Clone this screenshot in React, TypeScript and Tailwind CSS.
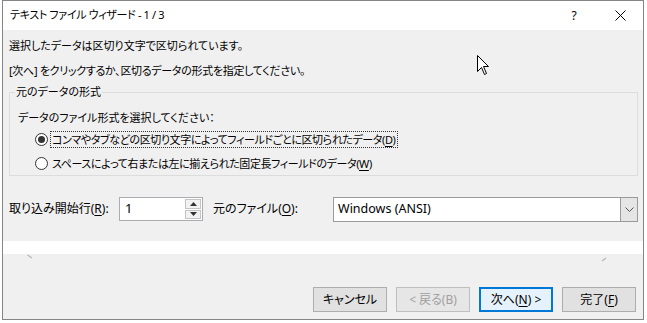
import React from 'react'

const jp = "[font-family:'Noto_Sans','Noto_Sans_CJK_JP',sans-serif] [font-feature-settings:'palt']"

// underlined access key like (D)
const Key = ({ k }: { k: string }) => (
  <>
    (<span className="underline underline-offset-2">{k}</span>)
  </>
)

const Radio = ({ checked }: { checked?: boolean }) => (
  <span className="w-[13px] h-[13px] rounded-full border border-[#333] bg-white flex items-center justify-center shrink-0">
    {checked && <span className="w-[7px] h-[7px] rounded-full bg-[#333]" />}
  </span>
)

const Btn = ({ children, disabled, primary }: { children: React.ReactNode; disabled?: boolean; primary?: boolean }) => (
  <div
    className={
      'w-[74px] h-[25px] flex items-center justify-center text-[12px] ' +
      (primary
        ? 'border-2 border-[#0078d7] bg-[#e5f1fb] text-black'
        : disabled
          ? 'border border-[#bfbfbf] bg-[#e6e6e6] text-[#a0a0a0]'
          : 'border border-[#adadad] bg-[#e1e1e1] text-black')
    }
  >
    {children}
  </div>
)

const Cursor = () => (
  <svg className="absolute left-[477px] top-[55px]" width="13" height="21" viewBox="0 0 13 21">
    <path d="M0.5 0.5 L0.5 16.5 L4.5 12.5 L7.5 19.5 L9.5 18.5 L6.5 11.5 L11.5 11.5 Z" fill="#fff" stroke="#000" strokeWidth="1" />
  </svg>
)

export default function App() {
  return (
    <div className={`w-[647px] h-[323px] bg-white overflow-hidden relative text-black ${jp}`}>
      <div className="ml-[2px] w-[642px] h-[320px] border border-[#858585] flex flex-col">
        {/* title bar */}
        <div className="h-[29px] bg-white flex items-center shrink-0">
          <div className="pl-[7px] text-[11px] tracking-[-0.35px] flex-1">テキスト ファイル ウィザード - 1 / 3</div>
          <div className="w-[46px] h-full flex items-center justify-center text-[12px]">?</div>
          <div className="w-[46px] h-full flex items-center justify-center">
            <svg width="11" height="11" viewBox="0 0 11 11">
              <path d="M0.5 0.5 L10.5 10.5 M10.5 0.5 L0.5 10.5" stroke="#000" strokeWidth="1" />
            </svg>
          </div>
        </div>

        {/* body */}
        <div className="flex-1 bg-[#f0f0f0] flex flex-col text-[11px]">
          <div className="pl-[6px] pt-[8px]">
            <div className="h-[16px] leading-[16px]">選択したデータは区切り文字で区切られています。</div>
            <div className="h-[16px] leading-[16px] mt-[9px] tracking-[-0.3px]">[次へ] をクリックするか、区切るデータの形式を指定してください。</div>

            <fieldset className="mt-[5px] w-[629px] border border-[#dcdcdc] pl-[5px] pb-[3px]">
              <legend className="leading-[16px] px-[1px]">元のデータの形式</legend>
              <div className="ml-[3px] pt-[10px] h-[26px] leading-[16px]">データのファイル形式を選択してください：</div>
              <div className="ml-[20px] mt-[5px] h-[17px] flex items-center gap-[2px]">
                <Radio checked />
                <span className="px-[1px] border border-dotted border-[#333] leading-[15px] tracking-[-0.4px]">
                  コンマやタブなどの区切り文字によってフィールドごとに区切られたデータ<Key k="D" />
                </span>
              </div>
              <div className="ml-[20px] mt-[7px] h-[17px] flex items-center gap-[2px]">
                <Radio />
                <span className="px-[1px] border border-transparent leading-[15px] tracking-[-0.4px]">
                  スペースによって右または左に揃えられた固定長フィールドのデータ<Key k="W" />
                </span>
              </div>
            </fieldset>

            <div className="mt-[21px] h-[24px] flex items-center text-[12px]">
              <div className="w-[110px]">取り込み開始行<Key k="R" />:</div>
              <div className="w-[84px] h-[24px] bg-white border border-[#abadb3] flex items-center">
                <span className="flex-1 pl-[5px] text-[13px]">1</span>
                <div className="w-[16px] h-[20px] mr-[1px] flex flex-col gap-[1px]">
                  <div className="flex-1 border border-[#c4c4c4] bg-[#f2f2f2] flex items-center justify-center">
                    <svg width="7" height="4" viewBox="0 0 7 4"><path d="M0 4 L3.5 0 L7 4 Z" fill="#333" /></svg>
                  </div>
                  <div className="flex-1 border border-[#c4c4c4] bg-[#f2f2f2] flex items-center justify-center">
                    <svg width="7" height="4" viewBox="0 0 7 4"><path d="M0 0 L3.5 4 L7 0 Z" fill="#333" /></svg>
                  </div>
                </div>
              </div>
              <div className="w-[130px] pl-[10px]">元のファイル<Key k="O" />:</div>
              <div className="w-[305px] h-[25px] bg-white border border-[#9a9a9a] flex items-center">
                <span className="flex-1 pl-[4px] text-[12.5px]">Windows (ANSI)</span>
                <div className="w-[17px] h-[23px] bg-[#e5e5e5] border-l border-[#9a9a9a] flex items-center justify-center">
                  <svg width="9" height="5" viewBox="0 0 9 5"><path d="M0.5 0.5 L4.5 4.5 L8.5 0.5" fill="none" stroke="#555" strokeWidth="1" /></svg>
                </div>
              </div>
            </div>
          </div>

          {/* preview top edge */}
          <div className="mt-[20px] h-[13px] bg-white" />
          <div className="h-[10px] flex justify-between pl-[24px] pr-[36px]">
            <svg width="6" height="6" viewBox="0 0 6 6"><path d="M0.5 1 L5 4" stroke="#b5b5b5" strokeWidth="1.2" /></svg>
            <svg width="6" height="6" viewBox="0 0 6 6" className="mt-[3px]"><path d="M5 1 L1 4" stroke="#b5b5b5" strokeWidth="1.2" /></svg>
          </div>

          {/* buttons */}
          <div className="mt-auto pb-[7px] pr-[7px] flex justify-end gap-[9px]">
            <Btn>キャンセル</Btn>
            <Btn disabled>&lt; 戻る(B)</Btn>
            <Btn primary>次へ<Key k="N" /> &gt;</Btn>
            <Btn>完了<Key k="F" /></Btn>
          </div>
        </div>
      </div>
      <Cursor />
    </div>
  )
}
